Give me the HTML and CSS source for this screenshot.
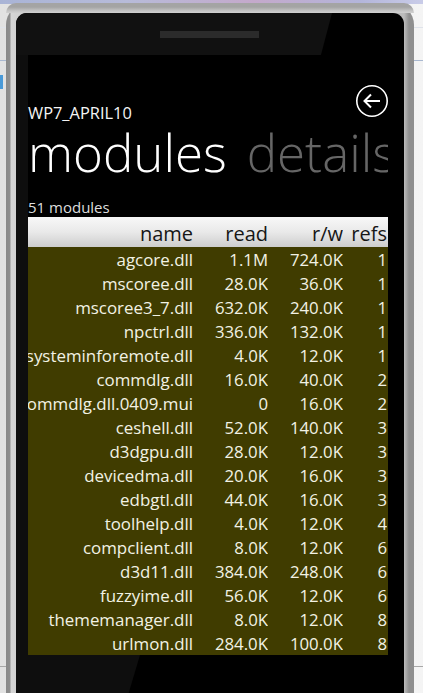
FILE: index.html
```html
<!DOCTYPE html>
<html lang="en">
<head>
<meta charset="utf-8">
<title>modules</title>
<link rel="stylesheet" href="styles.css">
</head>
<body>
<div class="desk-strip"></div>
<div class="desk-line line-a"></div>
<div class="desk-line line-b"></div>
<div class="desk-line line-c"></div>
<div class="desk-icon"></div>
<div class="phone">
  <div class="bezel">
    <div class="glare-top"></div>
    <div class="glare-left"></div>
    <div class="glare-bottom"></div>
    <div class="speaker"></div>
    <main class="screen">
      <div class="app-row">
        <span class="app-title">WP7_APRIL10</span>
        <svg class="back" width="34" height="34" viewBox="0 0 34 34" aria-hidden="true">
          <circle cx="17" cy="17" r="15.2" fill="none" stroke="#fff" stroke-width="1.6"/>
          <path d="M9.5 17H25M16 10.5L9.5 17L16 23.5" fill="none" stroke="#fff" stroke-width="2"/>
        </svg>
      </div>
      <div class="pivot"><span class="pivot-on">modules</span><span class="pivot-off">details</span></div>
      <div class="count">51 modules</div>
      <div class="table">
        <div class="row head"><span>name</span><span>read</span><span>r/w</span><span>refs</span></div>
        <div class="row"><span>agcore.dll</span><span>1.1M</span><span>724.0K</span><span>1</span></div>
        <div class="row"><span>mscoree.dll</span><span>28.0K</span><span>36.0K</span><span>1</span></div>
        <div class="row"><span>mscoree3_7.dll</span><span>632.0K</span><span>240.0K</span><span>1</span></div>
        <div class="row"><span>npctrl.dll</span><span>336.0K</span><span>132.0K</span><span>1</span></div>
        <div class="row"><span>systeminforemote.dll</span><span>4.0K</span><span>12.0K</span><span>1</span></div>
        <div class="row"><span>commdlg.dll</span><span>16.0K</span><span>40.0K</span><span>2</span></div>
        <div class="row"><span>commdlg.dll.0409.mui</span><span>0</span><span>16.0K</span><span>2</span></div>
        <div class="row"><span>ceshell.dll</span><span>52.0K</span><span>140.0K</span><span>3</span></div>
        <div class="row"><span>d3dgpu.dll</span><span>28.0K</span><span>12.0K</span><span>3</span></div>
        <div class="row"><span>devicedma.dll</span><span>20.0K</span><span>16.0K</span><span>3</span></div>
        <div class="row"><span>edbgtl.dll</span><span>44.0K</span><span>16.0K</span><span>3</span></div>
        <div class="row"><span>toolhelp.dll</span><span>4.0K</span><span>12.0K</span><span>4</span></div>
        <div class="row"><span>compclient.dll</span><span>8.0K</span><span>12.0K</span><span>6</span></div>
        <div class="row"><span>d3d11.dll</span><span>384.0K</span><span>248.0K</span><span>6</span></div>
        <div class="row"><span>fuzzyime.dll</span><span>56.0K</span><span>12.0K</span><span>6</span></div>
        <div class="row"><span>thememanager.dll</span><span>8.0K</span><span>12.0K</span><span>8</span></div>
        <div class="row"><span>urlmon.dll</span><span>284.0K</span><span>100.0K</span><span>8</span></div>
      </div>
    </main>
  </div>
</div>
</body>
</html>
```
FILE: styles.css
```css
* { box-sizing: border-box; }
html, body { margin: 0; height: 100%; }
body {
  position: relative;
  overflow: hidden;
  background: linear-gradient(90deg, #e2e2e2 0, #f4f4f4 100%);
  font-family: "Open Sans", "Noto Sans", sans-serif;
  color: #fff;
  padding: 3px 9px 0 6px;
}
.desk-strip {
  position: absolute; left: 0; right: 0; top: 0; height: 4px;
  background: linear-gradient(90deg, #a9b4d6, #b7bbd9 30%, #c4a9cb 60%, #b3b5da 85%, #c9cce8);
}
.desk-line { position: absolute; left: 0; right: 0; height: 1px; background: #c2cad8; }
.line-a { top: 27px; background: #dfe3ea; }
.line-b { top: 60px; background: #a9b8d0; }
.line-c { top: 666px; background: #a8a8a8; }
.desk-icon { position: absolute; left: 0; top: 75px; width: 3px; height: 14px; background: #4a9ad8; }
.phone {
  position: relative;
  height: 700px;
  padding: 10px 10px 0;
  border-radius: 22px 22px 0 0;
  background: linear-gradient(90deg, #8a8a8a 0, #8f8f8f 4px, #d6d6d6 5px, #d2d2d2 10px, #b8b8b8 50%, #bcbcbc 398px, #8f8f8f 403px, #8f8f8f 100%);
}
.phone::before {
  content: "";
  position: absolute; left: 0; right: 0; top: 0; height: 10px;
  border-radius: 22px 22px 0 0;
  background: linear-gradient(#a4a4a4 0, #a4a4a4 4px, #c6c6c6 8px, #d0d0d0 100%);
}
.bezel {
  position: relative;
  height: 100%;
  padding: 42px 16px 0 12px;
  border-radius: 11px 11px 0 0;
  background: #000;
  overflow: hidden;
}
.glare-top {
  position: absolute; left: 0; top: 0; width: 316px; height: 42px;
  background: #111;
  clip-path: polygon(0 0, 100% 0, 96.5% 100%, 0 100%);
}
.glare-left {
  position: absolute; left: 0; top: 42px; width: 12px; height: 600px;
  background: #0e0e0e;
}
.glare-bottom {
  position: absolute; left: 0; top: 642px; width: 124px; height: 50px;
  background: #0e0e0e;
  clip-path: polygon(0 0, 100% 0, 88% 100%, 0 100%);
}
.speaker {
  position: absolute; left: 144px; top: 18px; width: 99px; height: 7px;
  background: #2b2b2b;
}
.screen { position: relative; display: flex; flex-direction: column; height: 600px; background: #000; }
.app-row {
  display: flex; justify-content: space-between; align-items: flex-start;
  height: 50px; padding: 28px 0 0 0;
}
.app-title { margin-top: 20px; font-size: 16.4px; line-height: 20px; color: #f4f4f4; }
.back { margin-top: 1px; margin-right: -1px; flex: none; }
.pivot {
  display: flex; gap: 20px; overflow: hidden; height: 72px; margin-top: 16px;
  font-size: 51px; line-height: 62px; font-weight: 300; white-space: nowrap;
}
.pivot-on { color: #fff; }
.pivot-off { color: #666; }
.count { height: 20px; font-size: 15px; line-height: 20px; color: #ddd; margin-top: 6px; }
.table { width: 360px; }
.row {
  display: grid;
  grid-template-columns: 165px 75px 75px 44px;
  height: 24px;
  background: #403c00;
  font-size: 16.8px;
  line-height: 26px;
  color: #f2f2e4;
  white-space: nowrap;
}
.row span { overflow: hidden; display: flex; justify-content: flex-end; }
.row:not(.head) span:first-child { font-size: 16.9px; }
.head {
  height: 30px;
  line-height: 33px;
  font-size: 20px;
  color: #161616;
  background: linear-gradient(#f8f8f8 0, #e9e9e9 50%, #cdcdcd 100%);
}
```
